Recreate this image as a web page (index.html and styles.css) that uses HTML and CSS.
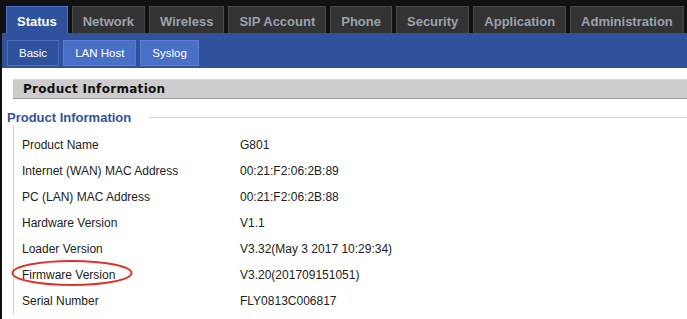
FILE: index.html
```html
<!DOCTYPE html>
<html lang="en">
<head>
    <meta charset="UTF-8">
    <title>Status - Basic</title>
    <link rel="stylesheet" href="styles.css">
</head>
<body>
    <div class="menu">
        <a class="tab active">Status</a>
        <a class="tab">Network</a>
        <a class="tab">Wireless</a>
        <a class="tab">SIP Account</a>
        <a class="tab">Phone</a>
        <a class="tab">Security</a>
        <a class="tab">Application</a>
        <a class="tab">Administration</a>
    </div>

    <div class="submenu">
        <a class="subtab active">Basic</a>
        <a class="subtab">LAN Host</a>
        <a class="subtab">Syslog</a>
    </div>

    <div class="content">
        <div class="page-title">Product Information</div>

        <div class="group">
            <div class="group-title">
                <span class="legend">Product Information</span>
                <span class="rule"></span>
            </div>
            <div class="rows">
                <div class="row"><span class="label">Product Name</span><span class="value">G801</span></div>
                <div class="row"><span class="label">Internet (WAN) MAC Address</span><span class="value">00:21:F2:06:2B:89</span></div>
                <div class="row"><span class="label">PC (LAN) MAC Address</span><span class="value">00:21:F2:06:2B:88</span></div>
                <div class="row"><span class="label">Hardware Version</span><span class="value">V1.1</span></div>
                <div class="row"><span class="label">Loader Version</span><span class="value">V3.32(May 3 2017 10:29:34)</span></div>
                <div class="row"><span class="label">Firmware Version</span><span class="value">V3.20(201709151051)</span></div>
                <div class="row"><span class="label">Serial Number</span><span class="value">FLY0813C006817</span></div>
            </div>
        </div>
    </div>

    <!-- annotation circle around the firmware row -->
    <svg class="mark" width="124" height="28" viewBox="0 0 124 28">
        <ellipse cx="62" cy="14" rx="59.5" ry="12" fill="none" stroke="#e0322f" stroke-width="2"/>
    </svg>
</body>
</html>
```

FILE: styles.css
```css
body {
    margin: 0;
    background: #111;
    font-family: "Liberation Sans", Arial, sans-serif;
    font-size: 12px;
    color: #222;
    height: 319px;
    overflow: hidden;
    position: relative;
}
.menu {
    display: flex;
    gap: 4px;
    height: 27px;
    padding: 6px 0 0 6px;
}
.tab {
    display: flex;
    align-items: center;
    padding: 2px 10px 0;
    background: #333;
    border: 1px solid #474747;
    border-bottom: none;
    color: #9ba2ac;
    font-size: 13px;
    font-weight: bold;
    white-space: nowrap;
}
.tab.active {
    background: #30529c;
    border-color: #4b6fc4;
    color: #fff;
}
.submenu {
    display: flex;
    gap: 4px;
    height: 26px;
    margin-left: 2px;
    padding: 7px 0 2px 5px;
    background: #30529c;
}
.subtab {
    display: flex;
    align-items: center;
    padding: 0 11px;
    background: #4a6fc6;
    border: 1px solid #5a7fd2;
    color: #fff;
    font-size: 11.5px;
}
.subtab.active {
    background: #30529c;
    border-color: #4b6fc4;
}
.content {
    margin-left: 2px;
    padding: 11px 0 0 11px;
    background: #fff;
    height: 240px;
}
.page-title {
    height: 18px;
    line-height: 19px;
    padding-left: 10px;
    background: #cccccc;
    border-top: 1px solid #dcdcdc;
    border-bottom: 1px solid #999;
    font-family: "DejaVu Sans", Verdana, sans-serif;
    font-size: 12px;
    font-weight: bold;
    letter-spacing: 0.3px;
    color: #111;
}
.group {
    margin-top: 10px;
}
.group-title {
    display: flex;
    align-items: center;
    height: 16px;
    margin-left: -6px;
}
.legend {
    color: #34509e;
    font-size: 13px;
    font-weight: bold;
}
.rule {
    flex: 1;
    margin-left: 18px;
    border-top: 1px solid #cfcfcf;
}
.rows {
    border-left: 1px solid #cfcfcf;
    padding: 7px 0 0 8px;
}
.row {
    display: flex;
    align-items: center;
    height: 26px;
}
.label {
    width: 218px;
}
.mark {
    position: absolute;
    left: 10px;
    top: 259px;
}
```
